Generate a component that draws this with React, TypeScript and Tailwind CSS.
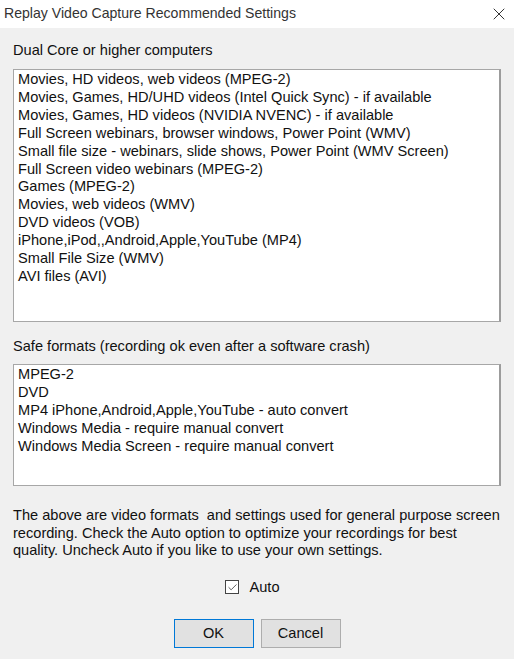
import { Check, X } from "lucide-react";

const presets = [
  "Movies, HD videos, web videos (MPEG-2)",
  "Movies, Games, HD/UHD videos (Intel Quick Sync) - if available",
  "Movies, Games, HD videos (NVIDIA NVENC) - if available",
  "Full Screen webinars, browser windows, Power Point (WMV)",
  "Small file size - webinars, slide shows, Power Point (WMV Screen)",
  "Full Screen video webinars (MPEG-2)",
  "Games (MPEG-2)",
  "Movies, web videos (WMV)",
  "DVD videos (VOB)",
  "iPhone,iPod,,Android,Apple,YouTube (MP4)",
  "Small File Size (WMV)",
  "AVI files (AVI)",
];

const safeFormats = [
  "MPEG-2",
  "DVD",
  "MP4 iPhone,Android,Apple,YouTube - auto convert",
  "Windows Media - require manual convert",
  "Windows Media Screen - require manual convert",
];

const ListBox = ({ items, height }: { items: string[]; height: string }) => (
  <div
    className={`${height} bg-white border border-[#a7a7a7] border-r-2 border-r-[#9c9c9c] pl-[4px] pt-[1px] overflow-hidden`}
  >
    {items.map((item) => (
      <div key={item} className="leading-[17.9px] whitespace-nowrap">
        {item}
      </div>
    ))}
  </div>
);

export default function App() {
  return (
    <div className="w-[514px] h-[659px] bg-[#f0f0f0] text-[14.6px] text-[#111] font-['Liberation_Sans',Arial,sans-serif] overflow-hidden">
      <div className="h-[28px] bg-white flex items-center justify-between pl-[4px] pr-[5px]">
        <span className="text-[14.1px] text-[#333]">Replay Video Capture Recommended Settings</span>
        <X size={20} strokeWidth={1.2} className="text-[#333]" />
      </div>

      <div className="px-[13px] flex flex-col">
        <div className="mt-[14px] leading-[17px]">Dual Core or higher computers</div>
        <div className="mt-[10px]">
          <ListBox items={presets} height="h-[253px]" />
        </div>

        <div className="mt-[16px] leading-[17px]">Safe formats (recording ok even after a software crash)</div>
        <div className="mt-[9px]">
          <ListBox items={safeFormats} height="h-[122px]" />
        </div>

        <p className="mt-[21px] leading-[17.5px] whitespace-nowrap">
          The above are video formats&nbsp; and settings used for general purpose screen
          <br />
          recording. Check the Auto option to optimize your recordings for best
          <br />
          quality. Uncheck Auto if you like to use your own settings.
        </p>

        <div className="mt-[17px] flex items-center justify-center gap-[10px] pr-[9px]">
          <div className="w-[14px] h-[14px] border border-[#444] bg-white flex items-center justify-center">
            <Check size={11} strokeWidth={1.6} className="text-[#222]" />
          </div>
          <span>Auto</span>
        </div>

        <div className="mt-[21px] flex justify-center gap-[7px]">
          <button className="w-[80px] h-[29px] bg-[#e1e1e1] border border-[#0078d7]">OK</button>
          <button className="w-[80px] h-[29px] bg-[#e1e1e1] border border-[#adadad]">Cancel</button>
        </div>
      </div>
    </div>
  );
}
